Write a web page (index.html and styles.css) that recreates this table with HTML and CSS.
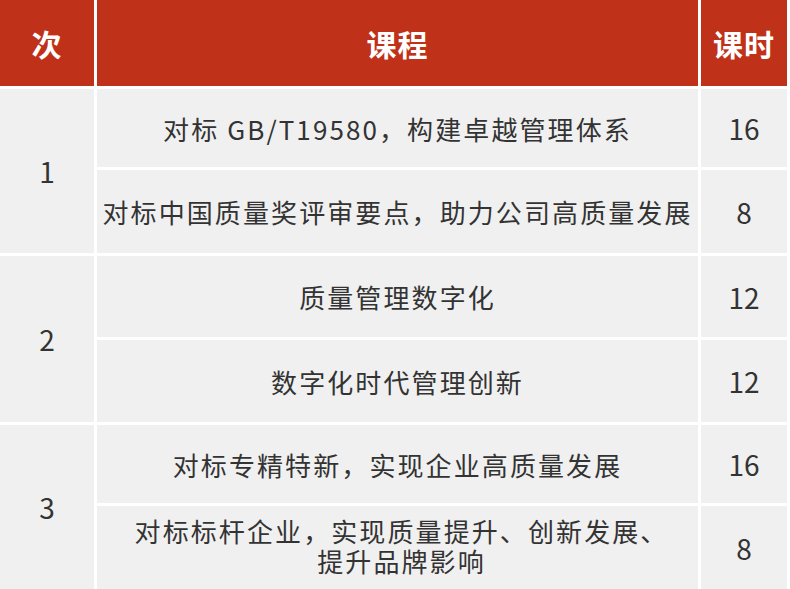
FILE: index.html
```html
<!DOCTYPE html>
<html lang="zh">
<head>
<meta charset="utf-8">
<link rel="stylesheet" href="styles.css">
</head>
<body>
<div class="table">
  <div class="th">次</div>
  <div class="th">课程</div>
  <div class="th">课时</div>

  <div class="td num g1">1</div>
  <div class="td course">对标 GB/T19580，构建卓越管理体系</div>
  <div class="td hours">16</div>
  <div class="td course">对标中国质量奖评审要点，助力公司高质量发展</div>
  <div class="td hours">8</div>

  <div class="td num g2">2</div>
  <div class="td course">质量管理数字化</div>
  <div class="td hours">12</div>
  <div class="td course">数字化时代管理创新</div>
  <div class="td hours">12</div>

  <div class="td num g3">3</div>
  <div class="td course">对标专精特新，实现企业高质量发展</div>
  <div class="td hours">16</div>
  <div class="td course multi"><span class="line">对标标杆企业，实现质量提升、创新发展、</span><span class="line">提升品牌影响</span></div>
  <div class="td hours">8</div>
</div>
</body>
</html>
```

FILE: styles.css
```css
html, body {
  margin: 0;
  padding: 0;
  background: #ffffff;
}

body {
  font-family: "Noto Sans CJK SC", "Noto Sans", sans-serif;
  width: 790px;
  height: 589px;
  overflow: hidden;
}

.table {
  display: grid;
  grid-template-columns: 94px 601px 86px;
  grid-template-rows: 86px 78px 83px 81px 82px 78px 83px;
  gap: 3px;
  width: 786px;
}

.th {
  background: #bf3119;
  color: #ffffff;
  font-weight: 700;
  font-size: 30px;
  letter-spacing: 1px;
  display: flex;
  align-items: center;
  justify-content: center;
}

.td {
  background: #f0f0f0;
  color: #333333;
  display: flex;
  align-items: center;
  justify-content: center;
  text-align: center;
}

.num {
  font-size: 28px;
  grid-row: span 2;
  grid-column: 1;
}

.course {
  font-size: 26px;
  letter-spacing: 2.1px;
  line-height: 31px;
}

.multi {
  flex-direction: column;
  padding-left: 8px;
  padding-bottom: 3px;
  line-height: 30px;
}

.line {
  display: block;
}

.hours {
  font-size: 28px;
}
```
